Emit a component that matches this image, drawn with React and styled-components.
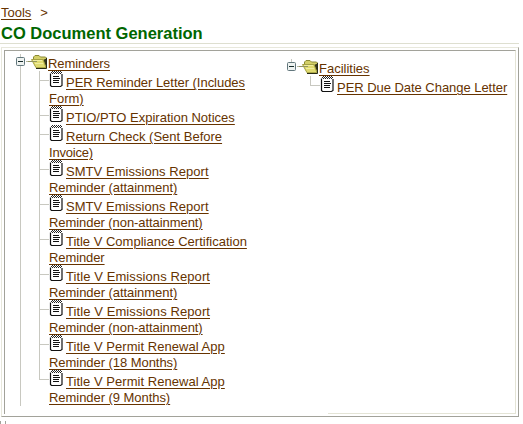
import React from "react";
import styled, { createGlobalStyle } from "styled-components";

const Global = createGlobalStyle`
  * { box-sizing: border-box; }
  body { margin: 0; background: #fff; font: 13px/16px "Liberation Sans", Arial, sans-serif; color: #663300; overflow: hidden; }
`;
const Page = styled.main`width: 523px; height: 424px; display: flex; flex-direction: column; overflow: hidden;`;
const Crumbs = styled.nav`display: flex; gap: 9px; height: 24px; padding: 5px 0 0 1px;`;
const Link = styled.a`
  color: #663300;
  text-decoration: underline;
  text-decoration-thickness: 1px;
  text-underline-offset: 2px;
  letter-spacing: ${(p) => p.$spacing || 0}px;
`;
const Title = styled.h1`
  margin: 0; height: 20px; padding-left: 1px; width: 519px;
  font-size: 16.5px; line-height: 19px; color: #006600;
  border-bottom: 1px solid #dedfd0;
`;
const Outer = styled.section`
  margin: 3px 0 0 1px; width: 518px; height: 370px; padding: 2px;
  border: 1px solid #e8e8dc; border-right-color: #a2a29a; border-bottom-color: #a2a29a;
`;
const Inner = styled.div`
  height: 364px; width: 512px; display: flex;
  border: 1px solid #a2a29a; border-right-color: #e4e4d6; border-bottom: 0;
  background: linear-gradient(#e4e4d6, #e4e4d6) right bottom / 187px 1px no-repeat;
`;
const Footer = styled.footer`display: flex; gap: 4px; padding-top: 4px;`;
const Tick = styled.i`width: 1px; height: 3px; background: #a2a29a;`;
const Tree = styled.div`
  display: grid; grid-template-columns: 10px 1fr; align-content: start;
  width: ${(p) => p.$width}px; padding: ${(p) => p.$top}px 0 0 11px;
`;
const Trunk = styled.div`width: 9px; display: flex; flex-direction: column; align-items: center; height: ${(p) => p.$height}px;`;
const Stem = styled.i`width: 1px; background: #c8c8c0; height: ${(p) => p.$height}px;`;
const Folder = styled.div`display: flex; height: 17px;`;
const FolderName = styled.div`padding-top: 2px;`;
const List = styled.ul`list-style: none; margin: 0; padding: 0 0 0 13px;`;
const Item = styled.li`display: grid; grid-template-columns: 10px 1fr; height: ${(p) => p.$height}px;`;
const Branch = styled.div`height: ${(p) => (p.$last ? 10 : p.$height)}px; border-left: 1px solid #c8c8c0;`;
const Twig = styled.div`height: 10px; border-bottom: 1px solid #c8c8c0;`;
const Lines = styled.div`display: flex; flex-direction: column; white-space: nowrap;`;
const First = styled.div`display: flex; gap: 3px; height: 20px; line-height: 24px;`;
const Second = styled.div`line-height: 16px; height: 16px;`;

const Toggle = () => (
  <svg width="9" height="9" viewBox="0 0 9 9">
    <rect x=".5" y=".5" width="8" height="8" rx="1" fill="#eef2f0" stroke="#62777d" />
    <path d="M2 4.5h5" stroke="#172c2c" />
  </svg>
);
const FolderIcon = () => (
  <svg width="22" height="16" viewBox="0 0 22 16">
    <path d="M0 7.5h6" stroke="#b4b4a0" />
    <path d="M7.500 5V3L9 1.500h4L14.500 3h5l1 1v10H11z" fill="#d3cf68" stroke="#8c8b35" />
    <path d="M17 6l3.500 7.500V4.500z" fill="#35371b" />
    <path d="M5.500 5.500h11.500l3 8.200H10z" fill="#e0db70" stroke="#a5a243" />
    <path d="M7 6.500h9M9 9.500h8" stroke="#f0eda0" />
    <path d="M20.500 4v10.500H10" fill="none" stroke="#292b15" />
    <path d="M2 7.500h9" stroke="#92945f" />
  </svg>
);
const DocIcon = () => (
  <svg width="14" height="17" viewBox="0 0 14 17">
    <path d="M2.500 2.500h10.500v12l-1 1H3l-1-1z" fill="#fff" />
    <path d="M1.500 2.500v12l1 1h9l1.500-1V3" fill="none" stroke="#111" strokeWidth="1.200" />
    <g shapeRendering="crispEdges">
      <path d="M3 .5h9M3 2.500h9" stroke="#222" strokeDasharray="1 1" />
      <path d="M2 1.500h11" stroke="#222" strokeDasharray="1 1" />
      <path d="M4 5.500h6M4 7.500h7M4 9.500h6M4 11.500h6" stroke="#111" />
    </g>
  </svg>
);

const attainment = ["Reminder (attainment)", -0.05];
const nonAttainment = ["Reminder (non-attainment)", -0.07];
const reminders = [
  [["PER Reminder Letter (Includes", -0.03], ["Form)", 0]],
  [["PTIO/PTO Expiration Notices", 0]],
  [["Return Check (Sent Before", 0], ["Invoice)", -0.2]],
  [["SMTV Emissions Report", 0.05], attainment],
  [["SMTV Emissions Report", 0.05], nonAttainment],
  [["Title V Compliance Certification", 0], ["Reminder", -0.1]],
  [["Title V Emissions Report", 0.09], attainment],
  [["Title V Emissions Report", 0.09], nonAttainment],
  [["Title V Permit Renewal App", 0.04], ["Reminder (18 Months)", -0.05]],
  [["Title V Permit Renewal App", 0.04], ["Reminder (9 Months)", -0.05]],
];
const facilities = [[["PER Due Date Change Letter", -0.04]]];

function Branches({ items }) {
  return (
    <List>
      {items.map(([a, b], i) => {
        const h = b ? 35 : 19;
        return (
          <Item key={i} $height={h}>
            <Branch $height={h} $last={i === items.length - 1}><Twig /></Branch>
            <Lines>
              <First><DocIcon /><Link $spacing={a[1]}>{a[0]}</Link></First>
              {b && <Second><Link $spacing={b[1]}>{b[0]}</Link></Second>}
            </Lines>
          </Item>
        );
      })}
    </List>
  );
}
function FolderTree({ name, spacing, items, width, top, below }) {
  return (
    <Tree $width={width} $top={top}>
      <Trunk $height={12 + below}><Stem $height={3} /><Toggle /><Stem $height={below} /></Trunk>
      <div>
        <Folder><FolderIcon /><FolderName><Link $spacing={spacing}>{name}</Link></FolderName></Folder>
        <Branches items={items} />
      </div>
    </Tree>
  );
}
export default function App() {
  return (
    <Page>
      <Global />
      <Crumbs><Link>Tools</Link><span>&gt;</span></Crumbs>
      <Title>CO Document Generation</Title>
      <Outer><Inner>
        <FolderTree name="Reminders" spacing={-0.1} items={reminders} width={271} top={3} below={340} />
        <FolderTree name="Facilities" items={facilities} width={239} top={8} below={0} />
      </Inner></Outer>
      <Footer><Tick /><Tick /></Footer>
    </Page>
  );
}
